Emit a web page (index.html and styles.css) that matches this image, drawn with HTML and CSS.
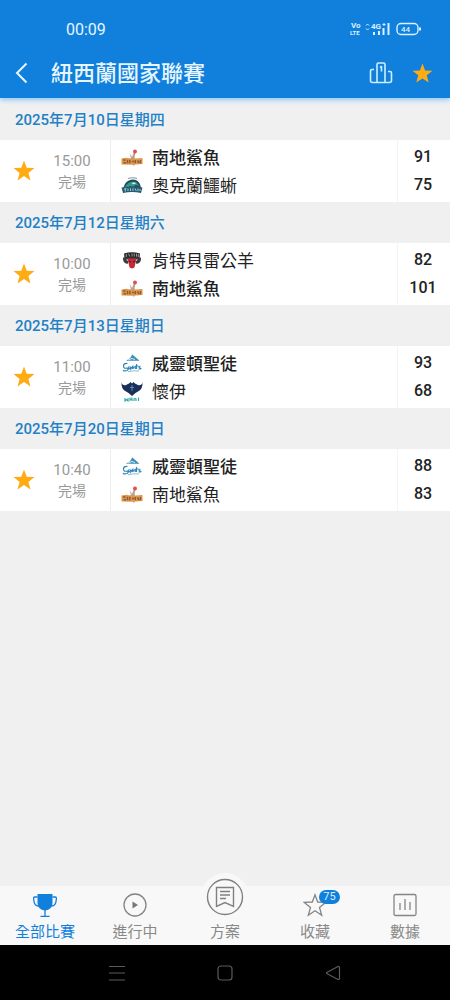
FILE: index.html
```html
<!DOCTYPE html>
<html lang="zh-Hant">
<head>
  <meta charset="UTF-8" />
  <meta name="viewport" content="width=device-width, initial-scale=1.0"/>
  <title>紐西蘭國家聯賽</title>
  <link rel="stylesheet" href="styles.css">
</head>
<body>
  <!-- Shared icons and team logos -->
  <svg class="sprite" aria-hidden="true">
    <symbol id="star" viewBox="0 0 24 24">
      <path d="M12 1.500l2.700 7.300 7.800.3-6.100 4.800 2.100 7.500-6.500-4.300-6.500 4.300 2.100-7.500L1.500 9.100l7.800-.3z" fill="#ffab14"/>
    </symbol>
    <symbol id="sharks" viewBox="0 0 22 22">
      <path d="M8.500 6l2.500 4 2-5 1.500.5-1 4.500 1 3-1.500 6.500-2.500-5-3-1.500 2.500-2z" fill="#b9a08c"/>
      <circle cx="14" cy="4.500" r="2" fill="#e2504d"/>
      <path d="M.5 11.500l5-.7 5 1 11-.8v6l-10 .8-11-.2z" fill="#e0984c"/>
      <path d="M2 13h2.500M2.500 15.800H5M6.500 12.800v3.500M8.800 12.800v3.500M11 14.500h2M14.300 13v3.300M16.500 13.500l1.500 2.500M19.500 13v3.300" stroke="#8f5a38" stroke-width="1.500" fill="none"/>
    </symbol>
    <symbol id="tuatara" viewBox="0 0 22 22">
      <path d="M7 3.500q5-1.500 9 0" stroke="#7d9da6" stroke-width="1.200" fill="none"/>
      <path d="M2.500 14C3 8 7 4.500 12 4.500c5 0 7.500 4 8 9z" fill="#244858"/>
      <path d="M4 12c2-4.500 6-6 11-5l3.500 4-4-1-3 2.500-2-1.500-3 2z" fill="#2f9a8c"/>
      <path d="M10.500 7.800l3-.3 1.500 1.200-3 .5z" fill="#d7eeea"/>
      <path d="M.5 12.500q10.500-2 21 0l-1.500 5.500q-9-1.800-18 0z" fill="#245c72"/>
      <path d="M3 14l2.500-.4M4.300 14v2.500M7 13.500v2.500M9.500 13.300v2.700M12 13.300v2.700M14 13.500l1.300 2.500M17 13.500v2.600M19 14v2" stroke="#a9c8cf" fill="none"/>
    </symbol>
    <symbol id="rams" viewBox="0 0 22 22">
      <path d="M3 3.500q8-2.500 16 0l-.5 4.500h-15z" fill="#27272c"/>
      <path d="M5.300 4v3M7.500 3.700l1.200 2.800M11 3.500v3M13.200 3.500v3M15.500 3.700v3M17.300 4v3" stroke="#b9babd" stroke-width=".8" fill="none"/>
      <path d="M2 7.500q-.5 5.500 4.500 6.500l1-2.500-2.500-2h12l-2.500 2 1 2.500q5-1 4.500-6.500z" fill="#3b3a3e"/>
      <path d="M6.500 8.500h9l-1 4.500-1 4.500-2.500 1-2.500-1L7.500 13z" fill="#c52b37"/>
      <path d="M8 11l2 1.300M14 11l-2 1.300" stroke="#4b1019"/>
    </symbol>
    <symbol id="saints" viewBox="0 0 22 22">
      <path d="M5 7.800l4-2.500 2.300-3.800 2.700 2.200 4.500 4.100z" fill="#3e8fb4"/>
      <path d="M7 7l4-1.500 3 1" stroke="#d8edf5" fill="none"/>
      <path d="M6.500 10.500q-4-.5-4 2.500t3.500 2q2 1 0 2.500-2.500 1-4-.3M8.500 13.500q-2 1-.8 2.300 1.500.3 2-2.300v2.500l2-2.500v2.500q1-2.500 2.500-2.500v2.500M15.500 11v5M14.500 13h3M19.500 13q-3 1-.5 2t-1.500 1" fill="none" stroke="#2f86b8" stroke-width="1.200"/>
      <path d="M7 18.800q5-1.600 11-.8" stroke="#8bbdd5" fill="none"/>
    </symbol>
    <symbol id="whai" viewBox="0 0 22 22">
      <path d="M.5 1q.5 3.500 4 3.200L8 2.500 9.500 1 11 2.500 12.500 1 14 2.500l3.500 1.700q3.500.3 4-3.200.5 7.500-4.500 9.500l-2.500 1.500-3.500 3-3.500-3L5 10.500Q0 8.500.5 1z" fill="#18305a"/>
      <path d="M11 4v6M9 6.500h4" stroke="#789bb5" stroke-width=".8" fill="none"/>
      <path d="M4 17v3l1.500-1.500L7 20v-3M9 16.500V20M9 18.300h2M11 16.500V20M13 20v-2q1-1 2 0v2M17.500 16.500V20" stroke="#2aa7a2" stroke-width="1.100" fill="none"/>
    </symbol>
  </svg>

  <header class="app-header">
    <div class="status-bar">
      <span class="clock">00:09</span>
      <svg class="status-icons" viewBox="0 0 72 16" fill="none" stroke="#d8f2ff">
        <g fill="#d8f2ff" stroke="none" font-weight="700">
          <text x="1" y="7" font-size="8">Vo</text>
          <text x="0" y="14" font-size="6">LTE</text>
          <text x="21" y="8" font-size="8">4G</text>
          <text x="51" y="11" font-size="8" font-weight="500">44</text>
        </g>
        <path d="M16 4.500l1.500-1.500L19 4.500M16 7.500L17.500 9 19 7.500M32.500 3.500h3M34 2v3"/>
        <path d="M24 14v-3M29 14v-4M33.500 14V7M38.500 14V2" stroke-width="2"/>
        <rect x="47" y="2.500" width="21" height="11" rx="4" stroke-width="1.400"/>
        <path d="M70 6.500v3" stroke-width="2"/>
      </svg>
    </div>
    <div class="title-bar">
      <button class="icon-btn back-btn" aria-label="返回">
        <svg width="16" height="24" viewBox="0 0 16 24" fill="none" stroke="#e6f6ff" stroke-width="2"><path d="M13.500 2.500L4 12l9.500 9.500"/></svg>
      </button>
      <h1>紐西蘭國家聯賽</h1>
      <button class="icon-btn" aria-label="排名">
        <svg width="24" height="24" viewBox="0 0 24 24" fill="none" stroke="#ceefff" stroke-width="1.600" stroke-linejoin="round"><path d="M5 8.500H3q-1.500 0-1.500 1.500v9.500q0 2 2 2h17q2 0 2-2V12q0-1.500-1.500-1.500h-2M8 21.500V3.500Q8 2 9.500 2h5Q16 2 16 3.500v18M11 6.500l1.500-1v5"/></svg>
      </button>
      <button class="icon-btn" aria-label="取消收藏">
        <svg width="23" height="23"><use href="#star"/></svg>
      </button>
    </div>
  </header>

  <main>
    <section>
      <h2>2025年7月10日星期四</h2>
      <article class="match">
        <button class="fav" aria-label="收藏"><svg width="24" height="24"><use href="#star"/></svg></button>
        <div class="when"><time>15:00</time><span class="state">完場</span></div>
        <div class="teams">
          <div class="team winner"><svg><use href="#sharks"/></svg>南地鯊魚</div>
          <div class="team"><svg><use href="#tuatara"/></svg>奧克蘭鱷蜥</div>
        </div>
        <div class="scores"><span>91</span><span>75</span></div>
      </article>
    </section>

    <section>
      <h2>2025年7月12日星期六</h2>
      <article class="match">
        <button class="fav" aria-label="收藏"><svg width="24" height="24"><use href="#star"/></svg></button>
        <div class="when"><time>10:00</time><span class="state">完場</span></div>
        <div class="teams">
          <div class="team"><svg><use href="#rams"/></svg>肯特貝雷公羊</div>
          <div class="team winner"><svg><use href="#sharks"/></svg>南地鯊魚</div>
        </div>
        <div class="scores"><span>82</span><span>101</span></div>
      </article>
    </section>

    <section>
      <h2>2025年7月13日星期日</h2>
      <article class="match">
        <button class="fav" aria-label="收藏"><svg width="24" height="24"><use href="#star"/></svg></button>
        <div class="when"><time>11:00</time><span class="state">完場</span></div>
        <div class="teams">
          <div class="team winner"><svg><use href="#saints"/></svg>威靈頓聖徒</div>
          <div class="team"><svg><use href="#whai"/></svg>懷伊</div>
        </div>
        <div class="scores"><span>93</span><span>68</span></div>
      </article>
    </section>

    <section>
      <h2>2025年7月20日星期日</h2>
      <article class="match">
        <button class="fav" aria-label="收藏"><svg width="24" height="24"><use href="#star"/></svg></button>
        <div class="when"><time>10:40</time><span class="state">完場</span></div>
        <div class="teams">
          <div class="team winner"><svg><use href="#saints"/></svg>威靈頓聖徒</div>
          <div class="team"><svg><use href="#sharks"/></svg>南地鯊魚</div>
        </div>
        <div class="scores"><span>88</span><span>83</span></div>
      </article>
    </section>
  </main>

  <!-- Bottom tabs -->
  <nav class="tabs">
    <a href="#" class="tab active">
      <svg width="24" height="24" viewBox="0 0 24 24" fill="none" stroke="#117fdc" stroke-width="1.300"><path d="M4.500 1h15v9q0 6.500-7.500 7.500-7.500-1-7.500-7.500z" fill="#117fdc" stroke="none"/><path d="M4.500 4H1.800Q.2 4 .7 6.500C1 11 2 13 5.500 13M19.500 4h2.700q1.600 0 1.100 2.500C23 11 22 13 18.500 13M12 17v6M7.500 23.300h9"/></svg>
      <span>全部比賽</span>
    </a>
    <a href="#" class="tab">
      <svg width="24" height="24" viewBox="0 0 24 24" fill="none" stroke="#858585" stroke-width="1.300"><circle cx="12" cy="12" r="11"/><path d="M9.500 8.500v7l5.500-3.500z" fill="#777" stroke="none"/></svg>
      <span>進行中</span>
    </a>
    <a href="#" class="tab">
      <i class="bump"><svg width="38" height="38" viewBox="0 0 38 38" fill="none" stroke="#808080" stroke-width="1.400"><circle cx="19" cy="19" r="17.500"/><path d="M10.500 9.500h17v19L19 24.500l-8.500 4zM14 13.500h10M14 17h10M14 20.500h6"/></svg></i>
      <span>方案</span>
    </a>
    <a href="#" class="tab">
      <svg width="24" height="24" viewBox="0 0 24 24" fill="none" stroke="#858585" stroke-width="1.300"><path d="M12 1.800l2.700 7.200 8 .4-6.200 5 2.200 7.800-6.700-4.400-6.700 4.400 2.200-7.800-6.200-5 8-.4z"/></svg>
      <b class="badge">75</b>
      <span>收藏</span>
    </a>
    <a href="#" class="tab">
      <svg width="24" height="24" viewBox="0 0 24 24" fill="none" stroke="#858585" stroke-width="1.300"><rect x="1" y="1.500" width="22" height="21" rx="1.500"/><path d="M7 10v7M12 6v11M17 9v8"/></svg>
      <span>數據</span>
    </a>
  </nav>

  <footer class="system-nav">
    <button aria-label="選單"><svg width="18" height="18" viewBox="0 0 18 18" fill="none" stroke="#5b5b5b" stroke-width="1.200"><path d="M1 2.500h16M1 9h16M1 16h16"/></svg></button>
    <button aria-label="主畫面"><svg width="18" height="18" viewBox="0 0 18 18" fill="none" stroke="#5b5b5b" stroke-width="1.200"><rect x="2" y="2" width="14" height="14" rx="3"/></svg></button>
    <button aria-label="返回"><svg width="18" height="18" viewBox="0 0 18 18" fill="none" stroke="#5b5b5b" stroke-width="1.200"><path d="M14 2.500L3.200 8.200q-1.500.8 0 1.600L14 15.500q1.500.3 1.500-1.500V4q0-1.800-1.500-1.500z"/></svg></button>
  </footer>
</body>
</html>
```

FILE: styles.css
```css
* {
  box-sizing: border-box;
}

body {
  margin: 0;
  min-height: 100vh;
  display: flex;
  flex-direction: column;
  background-color: #f0f0f0;
  color: #222;
  font-family: Roboto, 'Noto Sans CJK TC', sans-serif;
}

button {
  padding: 0;
  border: none;
  background: none;
  cursor: pointer;
}

svg {
  display: block;
}

.sprite {
  position: absolute;
  width: 0;
  height: 0;
}

/* Header */
.app-header {
  background-color: #117fdc;
  box-shadow: 0 2px 5px #8cc6fa;
  color: #e6f6ff;
}

.status-bar {
  display: flex;
  align-items: center;
  justify-content: space-between;
  height: 48px;
  padding: 10px 28px 0 66px;
}

.clock {
  font-size: 16px;
}

.status-icons {
  width: 72px;
  height: 16px;
}

.title-bar {
  display: flex;
  align-items: center;
  gap: 18px;
  height: 50px;
  padding: 0 16px 0 13px;
}

.back-btn {
  margin-right: 4px;
}

h1 {
  flex: 1;
  margin: 0;
  padding-bottom: 4px;
  font-size: 22px;
  font-weight: 500;
}

/* Match list */
main {
  flex: 1;
}

h2 {
  margin: 0;
  padding: 2px 15px 0;
  color: #2280c6;
  font-size: 15px;
  font-weight: 500;
  line-height: 39px;
}

section:first-child h2 {
  padding-top: 3px;
}

.match {
  display: grid;
  grid-template-columns: 48px 62px 1fr 53px;
  height: 62px;
  background-color: #fff;
}

.fav {
  display: flex;
  align-items: center;
  justify-content: center;
}

.when {
  display: flex;
  flex-direction: column;
  justify-content: center;
  padding: 2px 14px 0 0;
  color: #999;
  font-size: 15px;
  line-height: 21px;
  text-align: center;
}

.state {
  font-size: 14px;
}

.teams {
  padding: 4px 0 2px 10px;
  border-left: 1px solid #eee;
}

.team {
  display: flex;
  align-items: center;
  gap: 9px;
  font-size: 17px;
  line-height: 28px;
}

.team svg {
  width: 22px;
  height: 22px;
}

.winner {
  font-weight: 500;
}

.scores {
  display: flex;
  flex-direction: column;
  padding: 3px 2px 3px 0;
  border-left: 1px solid #f4f4f4;
  font-size: 16px;
  font-weight: 500;
  line-height: 28px;
  text-align: center;
}

/* Bottom tabs */
.tabs {
  display: flex;
  background-color: #f8f8f8;
}

.tab {
  position: relative;
  flex: 1;
  display: flex;
  flex-direction: column;
  align-items: center;
  justify-content: flex-end;
  gap: 5px;
  padding: 7px 0 3px;
  color: #888;
  font-size: 15px;
  line-height: 20px;
  text-decoration: none;
}

.tab.active {
  color: #117fdc;
}

.bump {
  position: absolute;
  top: -13px;
  left: 50%;
  display: flex;
  align-items: center;
  justify-content: center;
  width: 48px;
  height: 48px;
  margin-left: -24px;
  border-radius: 50%;
  background-color: #f8f8f8;
}

.badge {
  position: absolute;
  top: 4px;
  left: 50%;
  margin-left: 4px;
  width: 21px;
  border-radius: 7px;
  background-color: #117fdc;
  color: #d8f2ff;
  font-size: 11px;
  font-weight: 400;
  line-height: 14px;
  text-align: center;
}

/* Android navigation */
.system-nav {
  display: flex;
  align-items: center;
  justify-content: center;
  gap: 90px;
  height: 55px;
  background-color: #000;
}
```
